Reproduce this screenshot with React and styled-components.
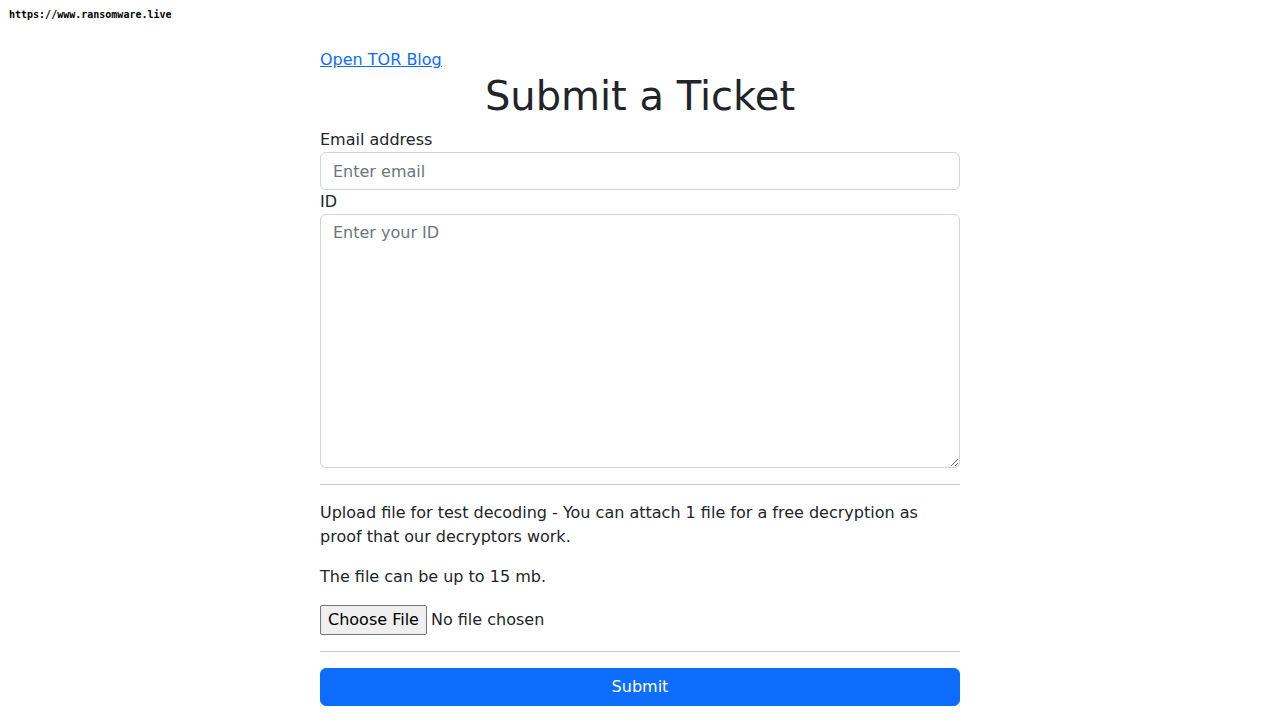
import React from "react";
import styled, { createGlobalStyle } from "styled-components";

const Global = createGlobalStyle`
  *, *::before, *::after { box-sizing: border-box; }
  body {
    margin: 0;
    font-family: "DejaVu Sans", "Liberation Sans", sans-serif;
    font-size: 16px;
    line-height: 1.5;
    color: #212529;
    background: #fff;
  }
`;

const Watermark = styled.div`
  position: absolute;
  top: 8px;
  left: 9px;
  font-family: "DejaVu Sans Mono", "Liberation Mono", monospace;
  font-weight: bold;
  font-size: 10px;
  line-height: 14px;
  color: #000;
`;

const Container = styled.div`
  width: 640px;
  margin: 48px auto 0;
`;

const BlogLink = styled.a`
  color: #0d6efd;
  text-decoration: underline;
`;

const Title = styled.h1`
  margin: 0 0 8px;
  font-size: 40px;
  font-weight: 500;
  line-height: 1.2;
  text-align: center;
`;

const Label = styled.label`
  display: block;
`;

const fieldBase = `
  display: block;
  width: 100%;
  padding: 6px 12px;
  font-family: inherit;
  font-size: 16px;
  line-height: 1.5;
  color: #212529;
  background: #fff;
  border: 1px solid #ced4da;
  border-radius: 6px;
  &::placeholder { color: #6c757d; opacity: 1; }
`;

const Input = styled.input`
  ${fieldBase}
  height: 38px;
`;

const TextArea = styled.textarea`
  ${fieldBase}
  height: 254px;
  resize: vertical;
`;

const Rule = styled.hr`
  margin: 16px 0;
  border: 0;
  border-top: 1px solid #212529;
  opacity: 0.25;
`;

const Para = styled.p`
  margin: 0 0 16px;
`;

const FileInput = styled.input`
  display: block;
  font-family: inherit;
  font-size: 16px;
  line-height: 1.5;
  height: 30px;
  color: #212529;

  &::file-selector-button {
    font-family: inherit;
    font-size: 16px;
    line-height: 24px;
    height: 30px;
    padding: 2px 7px;
    margin-right: 4px;
    color: #000;
    background: #efefef;
    border: 1px solid #767676;
    border-radius: 2px;
  }
`;

const SubmitButton = styled.button`
  display: block;
  width: 100%;
  height: 38px;
  padding: 6px 12px;
  font-family: inherit;
  font-size: 16px;
  line-height: 1.5;
  color: #fff;
  background: #0d6efd;
  border: 1px solid #0d6efd;
  border-radius: 6px;
  cursor: pointer;
`;

export default function App() {
  return (
    <>
      <Global />
      <Watermark>https://www.ransomware.live</Watermark>
      <Container>
        <BlogLink href="#">Open TOR Blog</BlogLink>
        <Title>Submit a Ticket</Title>
        <form onSubmit={(e) => e.preventDefault()}>
          <Label htmlFor="email">Email address</Label>
          <Input id="email" type="email" placeholder="Enter email" />
          <Label htmlFor="uid">ID</Label>
          <TextArea id="uid" placeholder="Enter your ID" />
          <Rule />
          <Para>
            Upload file for test decoding - You can attach 1 file for a free decryption as proof that our decryptors work.
          </Para>
          <Para>The file can be up to 15 mb.</Para>
          <FileInput type="file" />
          <Rule />
          <SubmitButton type="submit">Submit</SubmitButton>
        </form>
      </Container>
    </>
  );
}
